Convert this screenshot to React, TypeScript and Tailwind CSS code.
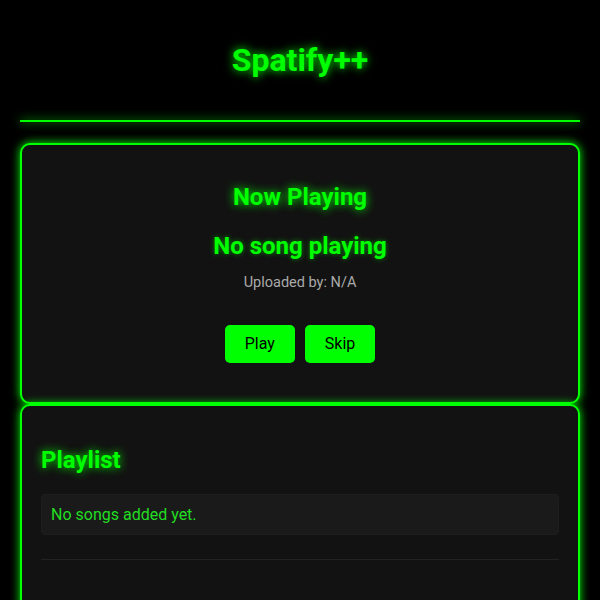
import React from "react";

export default function App() {
  const glow = { textShadow: "0 0 10px #00ff00" } as React.CSSProperties;
  return (
    <div className="min-h-screen bg-black font-['Roboto',sans-serif] text-white overflow-hidden" style={{ height: 600 }}>
      <header className="mx-5 flex flex-col">
        <div className="pt-[41px] pb-[41px] flex justify-center">
          <h1 className="text-[32px] leading-[38px] font-bold text-[#00ff00]" style={glow}>Spatify++</h1>
        </div>
        <div className="h-[2px] bg-[#00ff00] shadow-[0_0_10px_#00ff00]"></div>
      </header>
      <main className="mx-5 mt-[21px] flex flex-col">
        <section className="rounded-[10px] border-2 border-[#00ff00] bg-[#121212] shadow-[0_0_10px_#00ff00] flex flex-col items-center pt-[38px] pb-[39px]">
          <h2 className="text-[24px] leading-[28px] font-bold text-[#00ff00]" style={glow}>Now Playing</h2>
          <div className="mt-[21px] text-[24px] leading-[28px] font-bold text-[#00ff00]" style={{ textShadow: "0 0 5px rgba(0,255,0,0.5)" }}>No song playing</div>
          <div className="mt-[15px] text-[14.5px] leading-[16px] text-[#aaaaaa]">Uploaded by: N/A</div>
          <div className="mt-[34px] flex gap-[10px]">
            <button className="bg-[#00ff00] text-black text-[16px] leading-[18px] px-5 py-[10px] rounded-[5px]">Play</button>
            <button className="bg-[#00ff00] text-black text-[16px] leading-[18px] px-5 py-[10px] rounded-[5px]">Skip</button>
          </div>
        </section>
        <section className="rounded-[10px] border-2 border-[#00ff00] bg-[#121212] shadow-[0_0_10px_#00ff00] px-[19px] pt-[40px] pb-10">
          <h2 className="text-[24px] leading-[28px] font-bold text-[#00ff00]" style={glow}>Playlist</h2>
          <div className="mt-5 bg-[#1a1a1a] border border-[#1e1e1e] rounded-[4px] px-[9px] py-[10px] text-[16px] leading-[19px] text-[#22dd22]">No songs added yet.</div>
          <div className="mt-[24px] border-t border-[#222222]"></div>
          <div className="h-40"></div>
        </section>
      </main>
    </div>
  );
}
